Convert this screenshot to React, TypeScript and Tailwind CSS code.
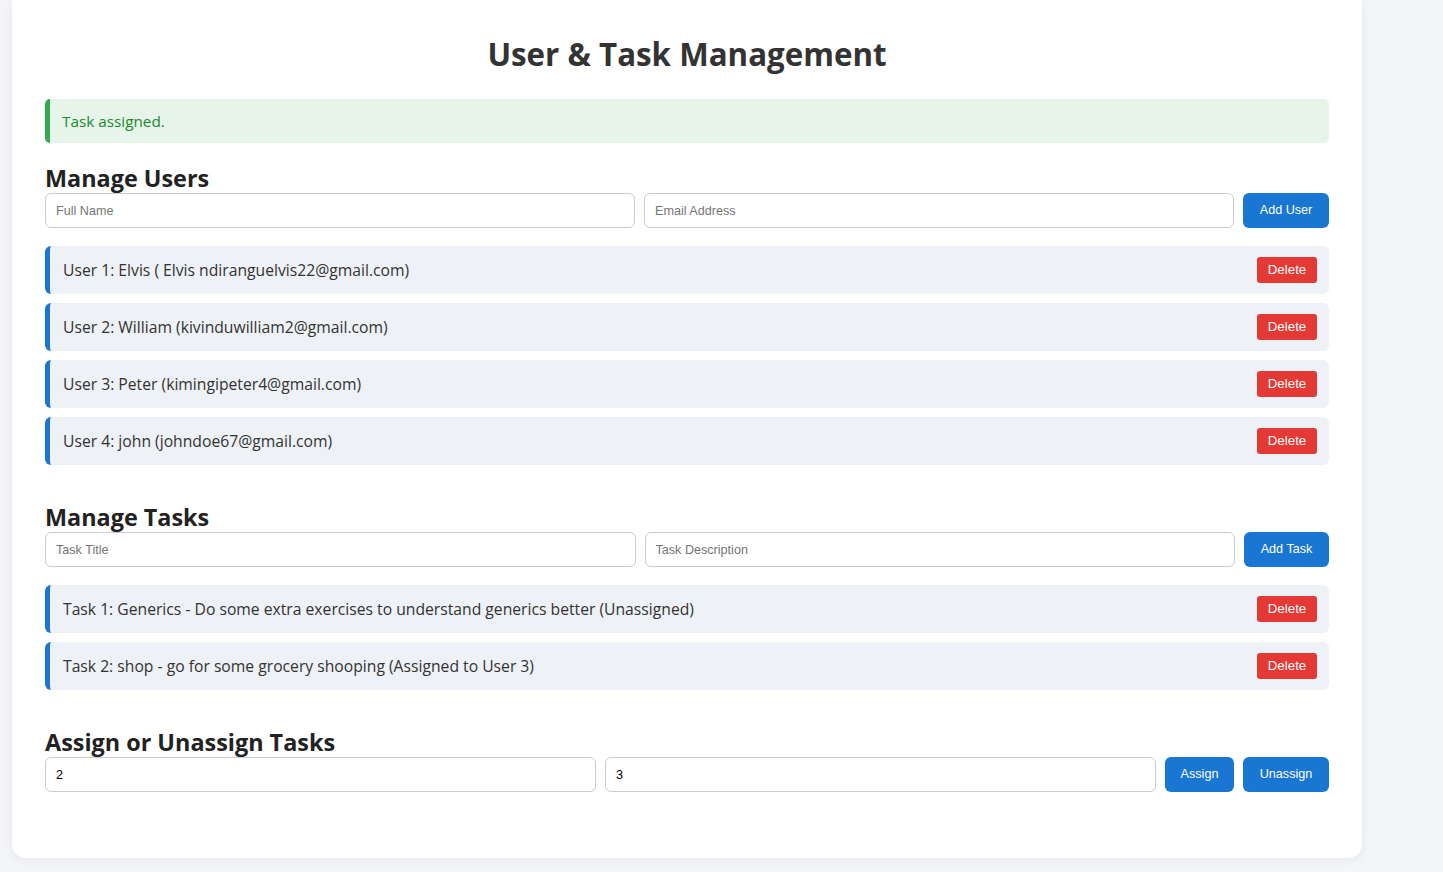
import { useState } from "react";

type User = { id: number; name: string; email: string };
type Task = { id: number; title: string; description: string; assignedTo: number | null };

const users: User[] = [
  { id: 1, name: "Elvis", email: " Elvis ndiranguelvis22@gmail.com" },
  { id: 2, name: "William", email: "kivinduwilliam2@gmail.com" },
  { id: 3, name: "Peter", email: "kimingipeter4@gmail.com" },
  { id: 4, name: "john", email: "johndoe67@gmail.com" },
];

const tasks: Task[] = [
  { id: 1, title: "Generics", description: "Do some extra exercises to understand generics better", assignedTo: null },
  { id: 2, title: "shop", description: "go for some grocery shooping", assignedTo: 3 },
];

const sans = "font-['Segoe_UI','Open_Sans',sans-serif]";
const inputCls =
  "h-[35px] min-w-0 flex-1 rounded-[6px] border border-[#cccccc] bg-white px-[10px] font-['Liberation_Sans',Arial,sans-serif] text-[12.6px] text-black outline-none placeholder:text-[#757575]";
const btnCls =
  "h-[35px] shrink-0 rounded-[6px] bg-[#1976d2] font-['Liberation_Sans',Arial,sans-serif] text-[12.6px] text-white";

function Row({ text }: { text: string }) {
  return (
    <li className="flex h-[48px] items-center justify-between rounded-[6px] border-l-[5px] border-[#1976d2] bg-[#eef1f6] pl-[13px] pr-[12px]">
      <span className="pt-[2px] text-[15.7px] text-[#333333]">{text}</span>
      <button className="h-[26px] w-[60px] rounded-[3px] bg-[#e53935] font-['Liberation_Sans',Arial,sans-serif] text-[13.33px] text-white">
        Delete
      </button>
    </li>
  );
}

function SectionTitle({ children }: { children: string }) {
  return <h2 className="h-[29px] text-[23.4px] leading-[29px] font-bold text-[#222222]">{children}</h2>;
}

export default function App() {
  const [taskId, setTaskId] = useState("2");
  const [userId, setUserId] = useState("3");

  return (
    <div className={`min-h-[872px] bg-[#f3f5f8] ${sans}`}>
      <div className="ml-[12px] w-[1350px] rounded-b-[14px] bg-white px-[33px] pt-[33px] pb-[66px] shadow-[0_2px_12px_rgba(0,0,0,0.06)]">
        <h1 className="text-center text-[31.3px] leading-[42px] font-bold text-[#333333]">User &amp; Task Management</h1>

        <div className="mt-[24px] flex h-[44px] items-center rounded-[5px] border-l-[5px] border-[#34a853] bg-[#e6f4ea] pl-[12px] pt-[1px] text-[15.3px] text-[#1b8a2a]">
          Task assigned.
        </div>

        <div className="mt-[21px]">
          <SectionTitle>Manage Users</SectionTitle>
          <div className="flex gap-[9px]">
            <input className={inputCls} placeholder="Full Name" />
            <input className={inputCls} placeholder="Email Address" />
            <button className={`${btnCls} w-[86px]`}>Add User</button>
          </div>
          <ul className="mt-[18px] flex flex-col gap-[9px]">
            {users.map((u) => (
              <Row key={u.id} text={`User ${u.id}: ${u.name} (${u.email})`} />
            ))}
          </ul>
        </div>

        <div className="mt-[38px]">
          <SectionTitle>Manage Tasks</SectionTitle>
          <div className="flex gap-[9px]">
            <input className={inputCls} placeholder="Task Title" />
            <input className={inputCls} placeholder="Task Description" />
            <button className={`${btnCls} w-[85px]`}>Add Task</button>
          </div>
          <ul className="mt-[18px] flex flex-col gap-[9px]">
            {tasks.map((t) => (
              <Row
                key={t.id}
                text={`Task ${t.id}: ${t.title} - ${t.description} (${
                  t.assignedTo ? `Assigned to User ${t.assignedTo}` : "Unassigned"
                })`}
              />
            ))}
          </ul>
        </div>

        <div className="mt-[38px]">
          <SectionTitle>Assign or Unassign Tasks</SectionTitle>
          <div className="flex gap-[9px]">
            <input className={inputCls} value={taskId} onChange={(e) => setTaskId(e.target.value)} />
            <input className={inputCls} value={userId} onChange={(e) => setUserId(e.target.value)} />
            <button className={`${btnCls} w-[69px]`}>Assign</button>
            <button className={`${btnCls} w-[86px]`}>Unassign</button>
          </div>
        </div>
      </div>
    </div>
  );
}
